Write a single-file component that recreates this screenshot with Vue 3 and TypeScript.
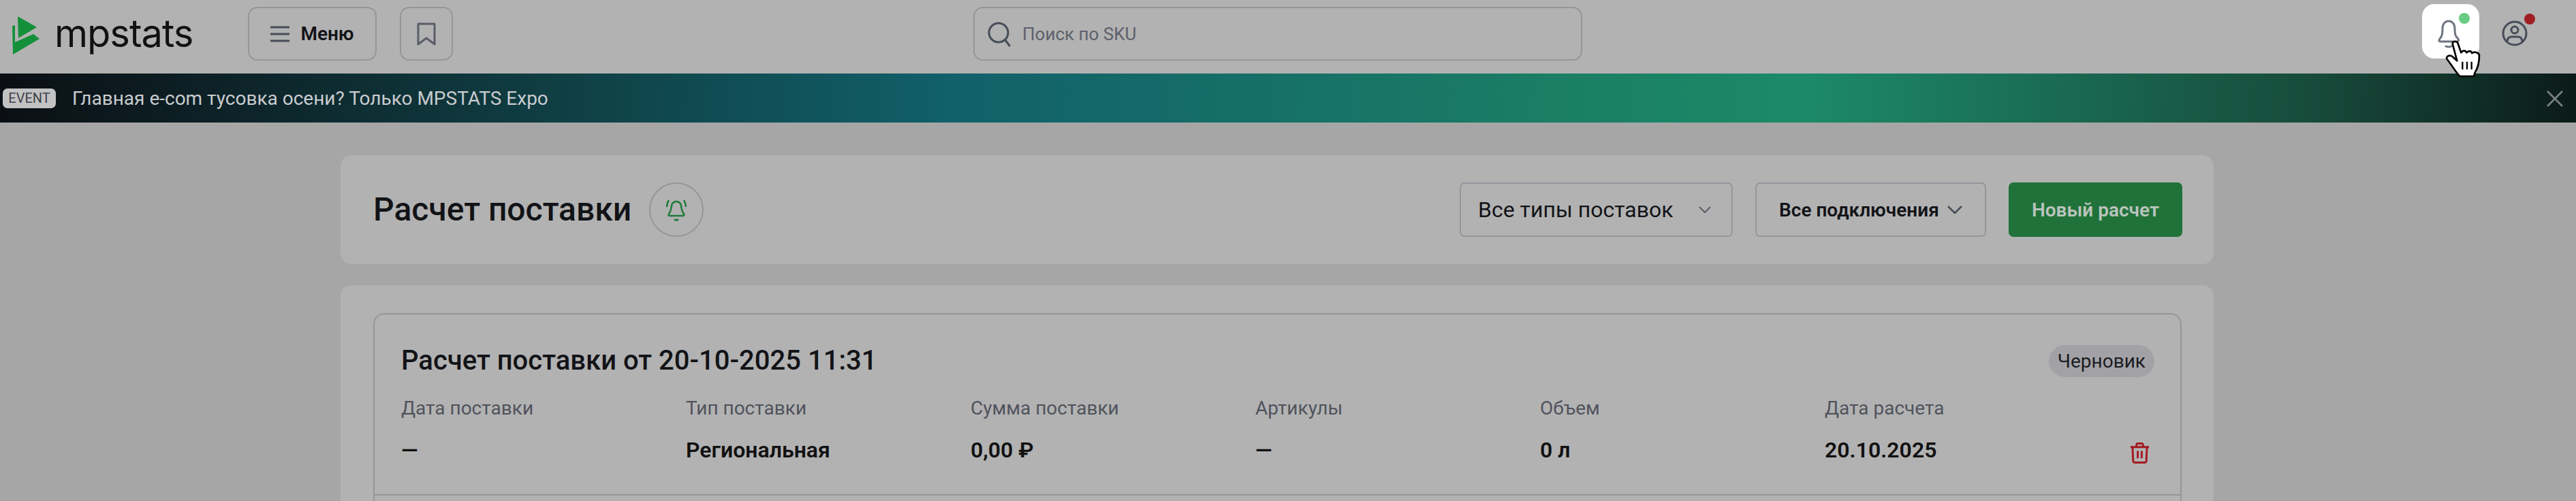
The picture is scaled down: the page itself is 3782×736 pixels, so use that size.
<script setup lang="ts">
const columns: { label: string; value: string }[] = [
  { label: 'Дата поставки', value: '—' },
  { label: 'Тип поставки', value: 'Региональная' },
  { label: 'Сумма поставки', value: '0,00 ₽' },
  { label: 'Артикулы', value: '—' },
  { label: 'Объем', value: '0 л' },
  { label: 'Дата расчета', value: '20.10.2025' },
]
</script>

<template>
  <div class="page">
    <header class="topbar">
      <div class="brand">
        <svg class="logo" viewBox="0 0 44 60" width="44" height="60">
          <path d="M10 2 38 18 11 34Z" fill="#14903a" />
          <path d="M2 16 6 15V40L33 28 42 35 3 58Z" fill="#14903a" />
        </svg>
        <span class="wordmark">mpstats</span>
      </div>
      <button class="btn menu-btn">
        <svg viewBox="0 0 28 24" width="28" height="24">
          <path d="M0 2H28M0 12H28M0 22H28" stroke="#474c58" stroke-width="3" fill="none" />
        </svg>
        <span>Меню</span>
      </button>
      <button class="btn bookmark-btn">
        <svg viewBox="0 0 28 34" width="28" height="34">
          <path d="M2 2H26V32L14 23 2 32Z" stroke="#585d68" stroke-width="3" stroke-linejoin="round" fill="none" />
        </svg>
      </button>
      <div class="search">
        <svg viewBox="0 0 36 38" width="36" height="38">
          <circle cx="17" cy="17" r="14" stroke="#474c58" stroke-width="3" fill="none" />
          <path d="M27 28 33 36" stroke="#474c58" stroke-width="3" stroke-linecap="round" fill="none" />
        </svg>
        <span>Поиск по SKU</span>
      </div>
      <div class="actions">
        <div class="bell-box">
          <svg viewBox="0 0 36 44" width="36" height="44">
            <path d="M5 30C9 26 9 21 9 15 9 8 13 4 18 4S27 8 27 15C27 21 27 26 32 30 33.500 33 32 34 30 34H6C4 34 3 33 5 30Z" stroke="#6d7380" stroke-width="3" stroke-linejoin="round" fill="none" />
            <path d="M14 41C16 42 20 42 22 41" stroke="#6d7380" stroke-width="3" stroke-linecap="round" fill="none" />
          </svg>
          <i class="dot green"></i>
        </div>
        <div class="user">
          <svg viewBox="0 0 38 38" width="38" height="38">
            <circle cx="19" cy="19" r="17" stroke="#474c58" stroke-width="3" fill="none" />
            <circle cx="19" cy="14" r="5" stroke="#474c58" stroke-width="3" fill="none" />
            <path d="M8 31C8 26 11 24 15 24H23C27 24 30 26 30 31" stroke="#474c58" stroke-width="3" fill="none" />
          </svg>
          <i class="dot red"></i>
        </div>
      </div>
      <svg class="cursor" viewBox="0 0 270 300" width="90" height="100">
        <path d="M92 132C92 122 112 118 116 132L130 172C138 160 150 162 154 172 162 162 174 164 178 174 186 166 208 170 210 184 210 210 204 240 190 262L186 276H124L112 262C96 240 80 216 66 198 66 186 80 180 92 190L112 208Z" fill="#fff" stroke="#000" stroke-width="8" stroke-linejoin="round" />
        <path d="M136 212V246M156 212V246M176 212V246" stroke="#000" stroke-width="7" fill="none" />
      </svg>
    </header>

    <div class="banner">
      <span class="event">EVENT</span>
      <span class="banner-text">Главная e-com тусовка осени? Только MPSTATS Expo</span>
      <svg class="close" viewBox="0 0 24 24" width="24" height="24">
        <path d="M1 1 23 23M23 1 1 23" stroke="#7d8186" stroke-width="2.500" fill="none" />
      </svg>
    </div>

    <main class="content">
      <section class="card toolbar">
        <h1>Расчет поставки</h1>
        <button class="round">
          <svg viewBox="0 0 34 34" width="34" height="34">
            <path d="M6 23C9 20 9 16 10 12 10 8 13 5 17 5S24 8 24 12C25 16 25 20 28 23 29 25 28 26 27 26H7C6 26 5 25 6 23Z" stroke="#1f7a3a" stroke-width="2.500" stroke-linejoin="round" fill="none" />
            <path d="M14 31C16 33 18 33 20 31" stroke="#1f7a3a" stroke-width="2.500" fill="none" />
            <path d="M3 13C3 9 4 6 6 3M31 13C31 9 30 6 28 3" stroke="#1f7a3a" stroke-width="2.500" fill="none" />
          </svg>
        </button>
        <div class="spacer"></div>
        <button class="select types">
          <span>Все типы поставок</span>
          <svg viewBox="0 0 18 10" width="18" height="10"><path d="M1 1 9 9 17 1" stroke="#585d68" stroke-width="2" fill="none" /></svg>
        </button>
        <button class="select conns">
          <span>Все подключения</span>
          <svg viewBox="0 0 22 12" width="22" height="12"><path d="M1 1 11 11 21 1" stroke="#474c58" stroke-width="2.500" fill="none" /></svg>
        </button>
        <button class="primary">Новый расчет</button>
      </section>

      <section class="card list">
        <article class="calc">
          <div class="calc-main">
            <div class="calc-head">
              <h2>Расчет поставки от 20-10-2025 11:31</h2>
              <span class="badge">Черновик</span>
            </div>
            <div class="calc-meta">
              <div v-for="c in columns" :key="c.label" class="col">
                <span class="label">{{ c.label }}</span>
                <span class="value">{{ c.value }}</span>
              </div>
              <svg class="trash" viewBox="0 0 30 32" width="29" height="31">
                <path d="M1 7H29M10 7V4C10 2.500 11 1.500 12.500 1.500H17.500C19 1.500 20 2.500 20 4V7M4 7 5 28C5 30 6 30.500 8 30.500H22C24 30.500 25 30 25 28L26 7M12 13V24M18 13V24" stroke="#a31a1f" stroke-width="3" fill="none" />
              </svg>
            </div>
          </div>
        </article>
      </section>
    </main>
  </div>
</template>

<style>
html, body { margin: 0; background: #a6a6a6; }
</style>

<style scoped>
.page {
  width: 3782px;
  height: 736px;
  overflow: hidden;
  background: #a6a6a6;
  font-family: Roboto, "Noto Sans", sans-serif;
  color: #121317;
}
button { font-family: inherit; cursor: pointer; padding: 0; }
.topbar {
  position: relative;
  height: 108px;
  box-sizing: border-box;
  background: #b2b2b2;
  display: flex;
  align-items: flex-start;
  padding-top: 10px;
}
.brand { width: 346px; display: flex; padding: 12px 0 0 16px; box-sizing: border-box; height: 79px; }
.logo { flex: none; }
.wordmark {
  margin: 0 0 0 20px;
  font-family: Inter, sans-serif;
  font-size: 56px;
  line-height: 54px;
  color: #111;
  letter-spacing: -1px;
}
.btn {
  height: 79px;
  box-sizing: border-box;
  background: transparent;
  border: 2px solid #94969b;
  border-radius: 14px;
  display: flex;
  align-items: center;
  justify-content: center;
}
.menu-btn { margin-left: 18px; width: 189px; gap: 16px; font-size: 28px; font-weight: 600; color: #121317; }
.bookmark-btn { margin-left: 34px; width: 78px; }
.search {
  margin-left: 764px;
  width: 894px;
  height: 79px;
  box-sizing: border-box;
  border: 2px solid #94969b;
  border-radius: 14px;
  display: flex;
  align-items: center;
  gap: 16px;
  padding-left: 18px;
  font-size: 26px;
  color: #5c606a;
}
.actions { position: relative; flex: 1; }
.bell-box {
  position: absolute;
  left: 1233px;
  top: -4px;
  width: 84px;
  height: 80px;
  background: #fff;
  border-radius: 18px;
  display: flex;
  align-items: center;
  justify-content: center;
}
.bell-box svg { margin: 6px 6px 0 0; }
.user { position: absolute; left: 1350px; top: 20px; width: 38px; height: 38px; }
.dot { position: absolute; width: 16px; height: 16px; border-radius: 50%; }
.green { background: #6acb84; left: 54px; top: 13px; }
.red { background: #a01e22; left: 33px; top: -10px; }
.cursor { position: absolute; left: 3570px; top: 20px; z-index: 2; }
.banner {
  height: 72px;
  display: flex;
  align-items: center;
  position: relative;
  background: linear-gradient(92deg, #0b0f14 0%, #0f3d42 21%, #11606a 37%, #1b8064 62%, #1c8a68 70%, #174a3a 90%, #0b1a18 100%);
  color: #c9cccf;
}
.event {
  margin-left: 4px;
  width: 78px;
  height: 29px;
  box-sizing: border-box;
  background: #c2c2c2;
  color: #3f4248;
  border-radius: 7px;
  font-size: 20px;
  line-height: 29px;
  text-align: center;
}
.banner-text { margin-left: 24px; font-size: 28px; }
.close { position: absolute; right: 19px; top: 25px; }
.content { padding: 48px 532px 0 500px; }
.card { background: #b2b2b2; border-radius: 16px; }
.toolbar {
  height: 160px;
  box-sizing: border-box;
  padding: 0 46px 0 48px;
  display: flex;
  align-items: center;
}
h1 { margin: 0; font-size: 48px; font-weight: 500; line-height: 54px; }
.round {
  margin-left: 26px;
  width: 80px;
  height: 80px;
  background: transparent;
  border: 2px solid #94969b;
  border-radius: 50%;
  display: flex;
  align-items: center;
  justify-content: center;
}
.spacer { flex: 1; }
.select {
  height: 80px;
  box-sizing: border-box;
  background: transparent;
  border: 2px solid #94969b;
  border-radius: 7px;
  display: flex;
  align-items: center;
  color: #121317;
}
.types { width: 401px; padding: 0 30px 0 25px; justify-content: space-between; font-size: 32px; }
.conns { width: 339px; margin-left: 33px; padding: 0 33px; justify-content: space-between; font-size: 28px; font-weight: 600; }
.primary {
  margin-left: 33px;
  width: 255px;
  height: 80px;
  border: none;
  background: #21723a;
  border-radius: 7px;
  color: #b9c4bc;
  font-size: 28px;
  font-weight: 600;
}
.list { margin-top: 31px; padding: 41px 47px 0 48px; height: 340px; box-sizing: border-box; }
.calc {
  height: 300px;
  box-sizing: border-box;
  border: 2px solid #94969b;
  border-bottom: none;
  border-radius: 16px 16px 0 0;
}
.calc-main {
  height: 266px;
  box-sizing: border-box;
  border-bottom: 2px solid #94969b;
  padding: 44px 38px 0 39px;
}
.calc-head { display: flex; justify-content: space-between; align-items: center; height: 48px; }
h2 { margin: 0; font-size: 40px; font-weight: 500; line-height: 48px; }
.badge {
  background: #a2a2a6;
  border-radius: 24px;
  height: 47px;
  line-height: 47px;
  padding: 0 13px;
  font-size: 28px;
  color: #1a1b20;
}
.calc-meta { position: relative; display: grid; grid-template-columns: repeat(6, 418px); margin-top: 30px; }
.col { display: flex; flex-direction: column; gap: 29px; }
.label { font-size: 28px; line-height: 32px; color: #50535c; }
.value { font-size: 32px; line-height: 32px; font-weight: 600; color: #111; }
.trash { position: absolute; right: 7px; top: 66px; }
</style>
